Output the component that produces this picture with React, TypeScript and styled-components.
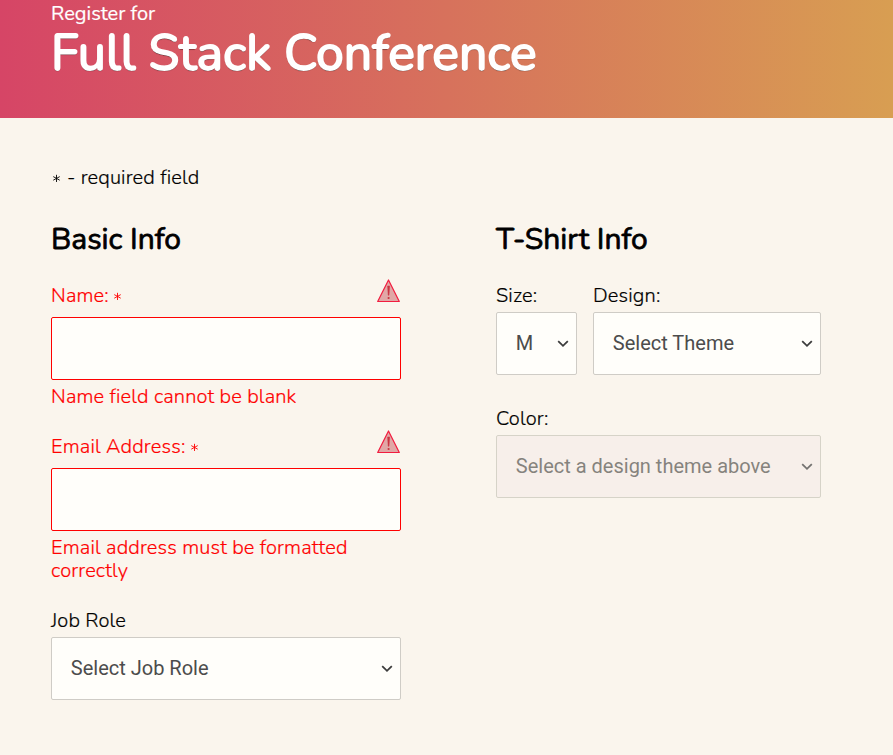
import React from "react";
import styled, { createGlobalStyle } from "styled-components";

const GlobalStyle = createGlobalStyle`
  *, *::before, *::after { box-sizing: border-box; }
  body {
    margin: 0;
    background: #faf5ed;
    color: #000;
    font: 300 20px/23px Nunito, Lato, "Open Sans", sans-serif;
    letter-spacing: 0.16px;
    -webkit-text-stroke: 0.2px currentColor;
  }
`;

const Page = styled.div`
  min-height: 755px;
  overflow: hidden;
`;

const Header = styled.header`
  height: 118px;
  padding: 2px 51px 0;
  color: #fff;
  background: linear-gradient(to right, #d64566, #d89e52);
  letter-spacing: 0;
`;

const Eyebrow = styled.span`
  display: block;
  font-weight: 400;
  font-size: 20px;
  line-height: 24px;
`;

const Title = styled.h1`
  margin: 0;
  font-size: 50px;
  line-height: 56px;
  font-weight: 400;
  white-space: nowrap;
  -webkit-text-stroke: 1.8px currentColor;
  text-shadow: 0 1px 1px rgba(0, 0, 0, 0.8), 0 1px 0 rgba(0, 0, 0, 0.5);
`;

const Form = styled.form`
  padding: 48px 72px 0 51px;
`;

const Note = styled.p`
  margin: 0;
`;

const Star = styled.span<{ $shift: number }>`
  display: inline-block;
  width: 10px;
  height: 10px;
  margin-left: ${(p) => p.$shift}px;
  margin-right: ${(p) => (p.$shift ? 0 : 0.7)}px;
  svg { display: block; }
`;

const Columns = styled.div`
  display: grid;
  grid-template-columns: 350px 325px;
  column-gap: 95px;
  margin-top: 31px;
`;

const Group = styled.fieldset`
  min-width: 0;
  margin: 0;
  padding: 0;
  border: 0;
`;

const Heading = styled.h2`
  margin: 0 0 23px;
  font-size: 30px;
  line-height: 40px;
  font-weight: 400;
  letter-spacing: -0.02px;
  -webkit-text-stroke: 0.8px currentColor;
`;

const Field = styled.label<{ $error?: boolean; $gap?: number }>`
  display: block;
  margin-bottom: ${(p) => p.$gap ?? 27}px;
  color: ${(p) => (p.$error ? "#f00" : "#000")};
  -webkit-text-stroke-color: currentColor;
`;

const LabelRow = styled.span<{ $height: number; $lower?: boolean }>`
  display: flex;
  justify-content: space-between;
  height: ${(p) => p.$height}px;
  padding-top: ${(p) => (p.$lower ? 1 : 0)}px;
`;

const Input = styled.input`
  display: block;
  width: 100%;
  height: 63px;
  padding: 0 19px;
  border: 1px solid #f00;
  border-radius: 2px;
  background: #fffefa;
  font: 400 20px Roboto, sans-serif;
`;

const SelectBox = styled.span<{ $disabled?: boolean }>`
  display: grid;
  align-items: center;
  opacity: ${(p) => (p.$disabled ? 0.7 : 1)};
  > * { grid-area: 1 / 1; }
`;

const NativeSelect = styled.select`
  appearance: none;
  width: 100%;
  height: 63px;
  padding: 0 30px 2px 18.8px;
  border: 1px solid #cfccc6;
  border-radius: 2px;
  background-color: #fffefa;
  color: #4c4c4c;
  font: 400 20px Roboto, sans-serif;
  -webkit-text-stroke: 0;
  &:disabled {
    border-color: #c8c5b9;
    background-color: #f6ede9;
    color: #55534f;
    opacity: 1;
  }
`;

const Chevron = styled.svg`
  justify-self: end;
  margin: 1px 8px 0 0;
  pointer-events: none;
`;

const Hint = styled.span`
  display: block;
  margin-top: 5px;
`;

const ShirtRow = styled.div`
  display: grid;
  grid-template-columns: 81px 228px;
  column-gap: 16px;
`;

const Warning = styled.svg`
  display: block;
  margin: -5px 1px 0 0;
`;

const Asterisk = ({ shift = 0 }: { shift?: number }) => (
  <Star $shift={shift}>
    <svg width="10" height="10" viewBox="0 0 10 10" stroke="currentColor" strokeWidth="0.9" strokeLinecap="round">
      <path d="M5.5 1.2V7.6M2.6 2.8L8.4 6M8.4 2.8L2.6 6" />
    </svg>
  </Star>
);

const WarningIcon = () => (
  <Warning width="24" height="24" viewBox="0 0 24 24">
    <path d="M12.5 1L23.3 22.5H1.7Z" fill="#e1a7a6" stroke="#f21c3f" strokeWidth="1.2" strokeLinejoin="round" />
    <path d="M11.6 7H13.6L13 16.2H12.2Z" fill="#c93440" stroke="#c93440" strokeWidth=".5" />
    <circle cx="12.6" cy="19" r="1.1" fill="#c93440" />
  </Warning>
);

function Select({ value, disabled }: { value: string; disabled?: boolean }) {
  return (
    <SelectBox $disabled={disabled}>
      <NativeSelect disabled={disabled}><option>{value}</option></NativeSelect>
      <Chevron width="12" height="8" viewBox="0 0 12 8" fill="none" stroke="#3c3c3c" strokeWidth="1.8">
        <path d="M1.2 1.2L6 5.8L10.8 1.2" />
      </Chevron>
    </SelectBox>
  );
}

export default function App() {
  return (
    <Page>
      <GlobalStyle />
      <Header>
        <Eyebrow>Register for</Eyebrow>
        <Title>Full Stack Conference</Title>
      </Header>
      <Form noValidate>
        <Note><Asterisk /> - required field</Note>
        <Columns>
          <Group>
            <Heading>Basic Info</Heading>
            <Field $error>
              <LabelRow $height={34} $lower><span>Name: <Asterisk shift={-1.8} /></span><WarningIcon /></LabelRow>
              <Input type="text" />
              <Hint>Name field cannot be blank</Hint>
            </Field>
            <Field $error>
              <LabelRow $height={33}><span>Email Address: <Asterisk shift={-1.8} /></span><WarningIcon /></LabelRow>
              <Input type="email" />
              <Hint>Email address must be formatted correctly</Hint>
            </Field>
            <Field>
              <LabelRow $height={28}>Job Role</LabelRow>
              <Select value="Select Job Role" />
            </Field>
          </Group>
          <Group>
            <Heading>T-Shirt Info</Heading>
            <ShirtRow>
              <Field $gap={32}>
                <LabelRow $height={29} $lower>Size:</LabelRow>
                <Select value="M" />
              </Field>
              <Field $gap={32}>
                <LabelRow $height={29} $lower>Design:</LabelRow>
                <Select value="Select Theme" />
              </Field>
            </ShirtRow>
            <Field>
              <LabelRow $height={28}>Color:</LabelRow>
              <Select value="Select a design theme above" disabled />
            </Field>
          </Group>
        </Columns>
      </Form>
    </Page>
  );
}
